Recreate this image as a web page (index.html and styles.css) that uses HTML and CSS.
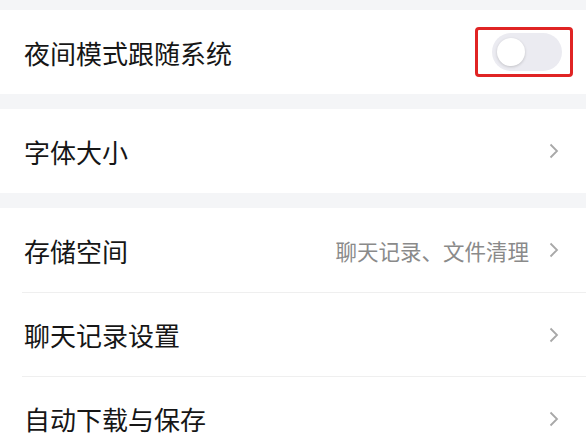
FILE: index.html
```html
<!DOCTYPE html>
<html lang="zh-CN">
<head>
  <meta charset="UTF-8" />
  <title>通用设置</title>
  <meta name="viewport" content="width=device-width, initial-scale=1.0" />
  <link rel="stylesheet" href="styles.css">
</head>
<body>
  <div class="page">
    <div class="group">
      <div class="row">
        <span class="label">夜间模式跟随系统</span>
        <div class="mark">
          <div class="switch"><span class="knob"></span></div>
        </div>
      </div>
    </div>

    <div class="group">
      <div class="row">
        <span class="label">字体大小</span>
        <svg class="chevron" viewBox="0 0 10 16"><path d="M1.5 1.5 L8 8 L1.5 14.5" /></svg>
      </div>
    </div>

    <div class="group">
      <div class="row">
        <span class="label">存储空间</span>
        <span class="extra">聊天记录、文件清理</span>
        <svg class="chevron" viewBox="0 0 10 16"><path d="M1.5 1.5 L8 8 L1.5 14.5" /></svg>
      </div>
      <div class="row">
        <span class="label">聊天记录设置</span>
        <svg class="chevron" viewBox="0 0 10 16"><path d="M1.5 1.5 L8 8 L1.5 14.5" /></svg>
      </div>
      <div class="row">
        <span class="label">自动下载与保存</span>
        <svg class="chevron" viewBox="0 0 10 16"><path d="M1.5 1.5 L8 8 L1.5 14.5" /></svg>
      </div>
    </div>
  </div>
</body>
</html>
```

FILE: styles.css
```css
* {
  box-sizing: border-box;
}

body {
  margin: 0;
  background: #f4f5f7;
  font-family: "Noto Sans CJK SC", "Noto Sans", sans-serif;
}

.page {
  padding-top: 10px;
  display: flex;
  flex-direction: column;
  gap: 15px;
}

.group {
  background: #ffffff;
}

.row {
  height: 84px;
  display: flex;
  align-items: center;
  padding: 0 27px 0 24px;
  position: relative;
}

.row + .row {
  border-top: 1px solid #efefef;
  margin-left: 22px;
  padding-left: 2px;
}

.label {
  flex: 1;
  font-size: 26px;
  color: #161616;
}

.extra {
  font-size: 21.5px;
  color: #8a8a8a;
  margin-right: 20px;
}

.chevron {
  width: 10px;
  height: 16px;
  fill: none;
  stroke: #a8a8a8;
  stroke-width: 1.8;
}

.row .mark {
  margin-right: -14px;
  width: 98px;
  height: 50px;
  border: 3px solid #e02424;
  border-radius: 4px;
  display: flex;
  align-items: center;
  padding-left: 14px;
}

.switch {
  width: 70px;
  height: 38px;
  border-radius: 19px;
  background: #ebebf1;
  display: flex;
  align-items: center;
  padding-left: 5px;
}

.knob {
  width: 28px;
  height: 28px;
  border-radius: 50%;
  background: #ffffff;
  box-shadow: 0 1px 3px rgba(0, 0, 0, 0.18);
}
```
